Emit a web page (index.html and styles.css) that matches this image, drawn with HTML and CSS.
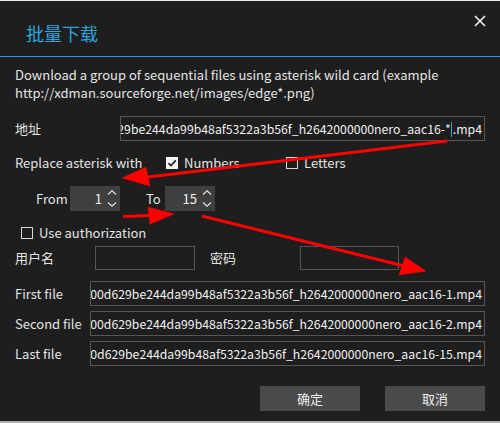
FILE: index.html
```html
<!DOCTYPE html>
<html lang="zh">
<head>
<meta charset="utf-8">
<title>批量下载</title>
<link rel="stylesheet" href="styles.css">
</head>
<body>
<div class="topstrip"></div>
<div class="dialog">
  <header class="head">
    <h1 class="title">批量下载</h1>
    <svg class="close" width="12" height="12" viewBox="0 0 12 12"><path d="M1 1L11 11M11 1L1 11" stroke="#f2f2f2" stroke-width="1.6" fill="none"/></svg>
  </header>
  <div class="content">
    <p class="desc">Download a group of sequential files using asterisk wild card (example<br>http://xdman.sourceforge.net/images/edge*.png)</p>

    <div class="row row-addr">
      <span class="label">地址</span>
      <div class="field field-addr"><span class="ftext">29be244da99b48af5322a3b56f_h2642000000nero_aac16-*<span class="caret"></span>.mp4</span></div>
    </div>

    <div class="row row-replace">
      <span class="label lbl-replace">Replace asterisk with</span>
      <span class="check checked"><svg width="12" height="12" viewBox="0 0 12 12"><path d="M2.5 6.2L5 8.6L9.8 3.4" stroke="#1e1e1e" stroke-width="1.6" fill="none"/></svg></span>
      <span class="ctext ctext-num">Numbers</span>
      <span class="check"></span>
      <span class="ctext">Letters</span>
    </div>

    <div class="row row-range">
      <span class="label lbl-from">From</span>
      <div class="spin"><span class="sval">1</span><svg class="sarrows" width="10" height="18" viewBox="0 0 10 18"><path d="M1 4.5L5 0.8L9 4.5M1 12.5L5 16.2L9 12.5" stroke="#e6e6e6" stroke-width="1.1" fill="none"/></svg></div>
      <span class="label lbl-to">To</span>
      <div class="spin"><span class="sval">15</span><svg class="sarrows" width="10" height="18" viewBox="0 0 10 18"><path d="M1 4.5L5 0.8L9 4.5M1 12.5L5 16.2L9 12.5" stroke="#e6e6e6" stroke-width="1.1" fill="none"/></svg></div>
    </div>

    <div class="row row-auth">
      <span class="check"></span>
      <span class="ctext">Use authorization</span>
    </div>

    <div class="row row-cred">
      <span class="label lbl-user">用户名</span>
      <div class="field field-user"></div>
      <span class="label lbl-pass">密码</span>
      <div class="field field-pass"></div>
    </div>

    <div class="files">
      <div class="row row-file">
        <span class="label">First file</span>
        <div class="field field-file"><span class="ftext">00d629be244da99b48af5322a3b56f_h2642000000nero_aac16-1.mp4</span></div>
      </div>
      <div class="row row-file">
        <span class="label">Second file</span>
        <div class="field field-file"><span class="ftext">00d629be244da99b48af5322a3b56f_h2642000000nero_aac16-2.mp4</span></div>
      </div>
      <div class="row row-file">
        <span class="label">Last file</span>
        <div class="field field-file"><span class="ftext">0d629be244da99b48af5322a3b56f_h2642000000nero_aac16-15.mp4</span></div>
      </div>
    </div>

    <div class="buttons">
      <button class="btn">确定</button>
      <button class="btn">取消</button>
    </div>
  </div>
</div>
<div class="bottomstrip"></div>

<svg class="annot" width="500" height="423" viewBox="0 0 500 423">
  <g fill="#ff0000" stroke="#ff0000">
    <line x1="447" y1="141" x2="140" y2="178" stroke-width="3"/>
    <polygon points="122,178 146,167 150,186" stroke-width="0.5"/>
    <line x1="123" y1="216.5" x2="150" y2="215.5" stroke-width="3"/>
    <polygon points="174,214 148,207 150,224" stroke-width="0.5"/>
    <line x1="202" y1="216" x2="408" y2="267" stroke-width="3"/>
    <polygon points="426,271 405,257 399,275" stroke-width="0.5"/>
  </g>
</svg>
</body>
</html>
```

FILE: styles.css
```css
html, body {
  margin: 0;
  padding: 0;
}
body {
  width: 500px;
  height: 423px;
  background: #1e1e1e;
  font-family: "Noto Sans CJK SC", "Noto Sans", sans-serif;
  font-size: 13px;
  color: #e4e4e4;
  position: relative;
  overflow: hidden;
}
.topstrip {
  height: 1px;
  background: #ececec;
}
.dialog {
  height: 420px;
  background: #1e1e1e;
  display: flex;
  flex-direction: column;
}
.bottomstrip {
  height: 2px;
  background: #b0b0b0;
}
.head {
  height: 55px;
  border-bottom: 1px solid #1ea2e2;
  display: flex;
  align-items: flex-start;
}
.title {
  margin: 20px 0 0 26px;
  font-size: 18px;
  line-height: 24px;
  font-weight: normal;
  color: #2aa5de;
}
.close {
  margin: 14px 14px 0 auto;
}
.content {
  display: flex;
  flex-direction: column;
  padding: 0 15px 0 15px;
}
.desc {
  margin: 9px 0 0 0;
  line-height: 18px;
  height: 36px;
}
.row {
  display: flex;
  align-items: center;
  height: 25px;
  white-space: nowrap;
}
.label {
  line-height: 18px;
}
.field {
  box-sizing: border-box;
  height: 25px;
  border: 1px solid #565656;
  display: flex;
  align-items: center;
  justify-content: flex-end;
  overflow: hidden;
  padding-right: 2px;
}
.ftext {
  flex-shrink: 0;
  white-space: nowrap;
  color: #f0f0f0;
  font-size: 12.25px;
  line-height: 18px;
}
.caret {
  display: inline-block;
  width: 1px;
  height: 15px;
  background: #2aa5de;
  vertical-align: -3px;
  margin: 0 0.5px;
}
.row-addr {
  margin-top: 14px;
}
.row-addr .label {
  width: 105px;
}
.field-addr {
  width: 365px;
}
.row-replace {
  margin-top: 10px;
  height: 24px;
}
.lbl-replace {
  width: 151px;
}
.check {
  box-sizing: border-box;
  width: 12px;
  height: 12px;
  border: 1.5px solid #d8d8d8;
  background: #1e1e1e;
  display: inline-flex;
  flex-shrink: 0;
}
.check.checked {
  background: #f4f4f4;
  border: none;
}
.ctext {
  margin-left: 6px;
  line-height: 18px;
}
.ctext-num {
  width: 102px;
}
.row-range {
  margin-top: 11px;
  padding-left: 21px;
}
.lbl-from {
  width: 34px;
}
.lbl-to {
  margin-left: 26px;
  width: 19px;
}
.spin {
  box-sizing: border-box;
  width: 50px;
  height: 25px;
  background: #3f3f3f;
  display: flex;
  align-items: center;
  justify-content: flex-end;
  padding-right: 3px;
}
.sval {
  color: #f0f0f0;
  margin-right: 5px;
}
.sarrows {
  display: block;
}
.row-auth {
  margin-top: 10px;
  height: 24px;
  padding-left: 6px;
}
.row-cred {
  margin-top: 1px;
  height: 24px;
}
.lbl-user {
  width: 80px;
}
.field-user {
  width: 100px;
  height: 24px;
}
.lbl-pass {
  margin-left: 15px;
  width: 90px;
}
.field-pass {
  width: 99px;
  height: 24px;
}
.files {
  margin-top: 11px;
  display: flex;
  flex-direction: column;
  gap: 5px;
}
.row-file .label {
  width: 75px;
}
.field-file {
  width: 395px;
}
.buttons {
  margin-top: 20px;
  display: flex;
  justify-content: flex-end;
  gap: 25px;
}
.btn {
  width: 100px;
  height: 25px;
  border: none;
  background: #4a4a4a;
  color: #eeeeee;
  font-family: "Noto Sans CJK SC", "Noto Sans", sans-serif;
  font-size: 13px;
  padding: 0;
}
.annot {
  position: absolute;
  left: 0;
  top: 0;
  pointer-events: none;
}
```
